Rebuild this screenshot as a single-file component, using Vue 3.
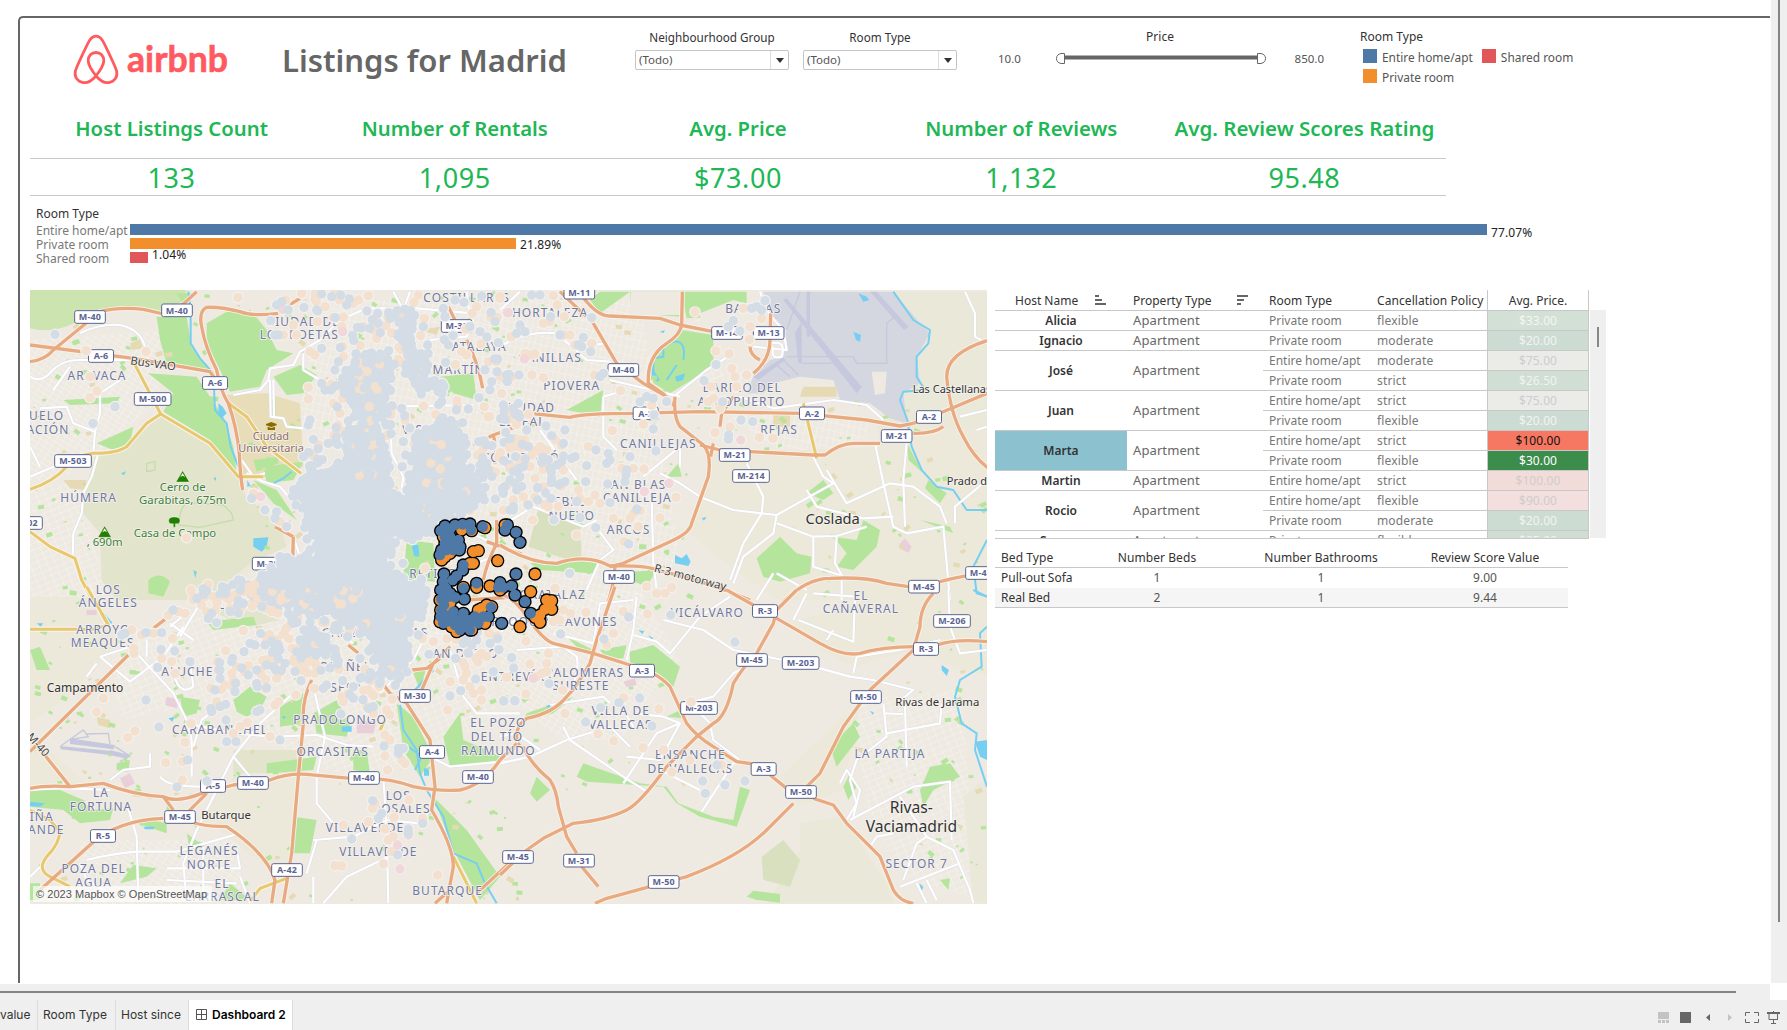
<script setup>
const kpis = [
  ['Host Listings Count', '133'],
  ['Number of Rentals', '1,095'],
  ['Avg. Price', '$73.00'],
  ['Number of Reviews', '1,132'],
  ['Avg. Review Scores Rating', '95.48'],
]
const bars = [
  { name: 'Entire home/apt', color: '#4e79a7', width: 1357, value: '77.07%', shift: 3 },
  { name: 'Private room', color: '#f28e2b', width: 386, value: '21.89%', shift: -1 },
  { name: 'Shared room', color: '#e15759', width: 18, value: '1.04%', shift: -8 },
]
const hosts = [
  { name: 'Alicia', rows: [['Private room', 'flexible', '$33.00', '#d3e0d5', '#f3f6f3']] },
  { name: 'Ignacio', rows: [['Private room', 'moderate', '$20.00', '#cddcd2', '#f0f4f1']] },
  { name: 'José', rows: [['Entire home/apt', 'moderate', '$75.00', '#ebece8', '#cdcdcd'], ['Private room', 'strict', '$26.50', '#d0ded4', '#f0f4f1']] },
  { name: 'Juan', rows: [['Entire home/apt', 'strict', '$75.00', '#ebece8', '#cdcdcd'], ['Private room', 'flexible', '$20.00', '#cddcd2', '#f0f4f1']] },
  { name: 'Marta', active: true, rows: [['Entire home/apt', 'strict', '$100.00', '#f67862', '#111'], ['Private room', 'flexible', '$30.00', '#3c8d4c', '#fff']] },
  { name: 'Martin', rows: [['Entire home/apt', 'strict', '$100.00', '#f2dcda', '#cfcccc']] },
  { name: 'Rocio', rows: [['Entire home/apt', 'flexible', '$90.00', '#f3dfde', '#cfcccc'], ['Private room', 'moderate', '$20.00', '#cddcd2', '#f0f4f1']] },
  { name: 'Susana', rows: [['Private room', 'flexible', '$25.00', '#cfddd3', '#f0f4f1']] },
]
const beds = [
  ['Pull-out Sofa', '1', '1', '9.00'],
  ['Real Bed', '2', '1', '9.44'],
]

// The map is split into four sheets; sheet units are a third of a pixel.
const sheets = [
  {
    at: 'translate(20 280) scale(.33333)',
    areas: [
      ['field', 'M240 700 L340 500 L420 405 L560 490 L655 595 L700 700 L840 770 L700 860 L640 960 L290 960 L250 860Z'],
      ['wood', 'M30 30 H500 L480 90 L420 100 L370 85 L240 90 L150 135 Q90 160 30 145Z'],
      ['casa', 'M230 520 L320 500 L420 405 L560 490 L655 595 L670 640 L780 740 L800 800 L690 850 L600 930 L560 960 H290 L245 900 L240 760 L180 690 L215 560Z'],
      ['uni', 'M610 345 L740 340 L840 370 L850 560 L740 590 L665 590 L640 450Z'],
      ['park', 'M410 110 L500 110 L515 200 L570 270 L480 255 L440 250 L420 180Z'],
      ['park', 'M560 130 L620 95 L700 100 L740 150 L770 210 L820 220 L740 270 L720 320 L630 335 L600 270 L560 190Z'],
      ['park', 'M760 290 L840 255 L890 285 L850 340 L800 345Z'],
      ['park', 'M385 280 L530 290 L570 350 L610 410 L640 500 L650 580 L570 480 L430 395 L460 340Z'],
      ['park', 'M230 490 L340 440 L330 490 L280 510Z'],
      ['park', 'M700 600 L770 630 L830 720 L760 670Z'],
      ['park', 'M1160 780 L1240 790 L1245 905 L1150 900Z'],
      ['park', 'M470 40 H530 L490 72Z M1260 290 L1360 280 L1370 360 L1300 340Z M730 560 L850 545 L820 600 L740 610Z'],
      ['park', 'M385 900 Q420 870 450 905 L430 950 L385 940Z M130 360 L300 350 L290 370 L150 375Z'],
      ['park', 'M750 350 L766 355 L768 410 L752 412Z M700 540 L775 530 L775 550 L710 575Z'],
      ['water', 'M700 775 L745 772 L740 800 L725 815 L700 800Z M1175 795 L1195 795 L1198 830 L1182 828Z M595 370 L608 380 L620 400 L605 415 L596 400Z M682 600 L692 618 L682 620Z M303 580 l15 -6 -6 12Z M580 595 l8 -4 0 12Z M520 870 l10 5 -4 20Z'],
      ['line', 'M500 670 Q480 680 475 735 L540 742 L640 720 L635 700 L610 675 L520 668Z M380 550 L405 545 L405 570 L380 575Z'],
      ['tan', 'M330 190 L360 178 L370 205 L335 210Z M130 600 L200 600 L195 630 L150 625Z M1200 150 L1260 140 L1250 165Z'],
    ],
    rivers: ['M505 35 L512 90 L512 190 L540 235 L580 280 L585 390 L620 430 L632 500 L655 560', 'M760 610 L790 595 L815 575'],
    streets: [
      'M180 160 Q240 130 300 135 Q370 150 378 215', 'M30 290 Q60 310 90 280 Q120 240 180 240 L260 240 L330 240', 'M30 590 L100 560 L220 520 L225 455 L160 430 L140 380 L60 385 M225 455 L240 400 L240 340 L300 300',
      'M235 520 L215 590 L190 640 L185 700 L160 760 L158 830', 'M640 345 L720 330 L745 300 L750 265 L820 255 L840 215 L900 180 L960 120 L1040 85 L1190 85 L1360 100', 'M750 300 L752 410 L790 415 L800 440 L850 445', 'M760 300 L762 410',
      'M680 580 L730 605 L780 620 L830 680', 'M1120 35 L1150 90 L1170 35 M1340 35 L1350 110', 'M1100 290 L1110 380 L1115 520 L1150 590 L1135 700', 'M1110 380 L1360 375', 'M850 220 L850 270 L900 300',
      'M1230 180 L1340 170 L1360 120', 'M1330 750 L1420 790 M1290 960 L1340 860 L1420 830', 'M665 540 L700 590 L735 580', 'M100 330 L150 260 M60 560 L30 500', 'M820 770 L850 860',
    ],
    yellows: ['M30 628 Q100 605 140 560 Q170 525 220 520 Q290 520 320 500 L380 430 L422 402 L340 245', 'M422 402 L570 490 L655 590 L730 590', 'M625 370 L680 410 L740 500 L843 580', 'M30 755 L90 800 L165 835 L185 900 L222 970'],
    motorways: ['M30 245 Q75 240 100 210 L240 95 Q300 80 370 88 L430 102 L490 72 L530 35', 'M30 195 L340 235 L570 275 L602 320', 'M775 100 Q700 110 660 95 Q600 80 560 82 Q535 95 545 140 Q555 200 590 270 Q600 330 625 370 Q650 440 658 520 Q660 580 668 630', 'M800 80 L840 55', 'M1340 180 Q1375 250 1388 325', 'M1285 80 l20 40', 'M1360 495 L1420 465 L1505 435 M1420 465 Q1430 500 1425 550', 'M1430 720 V790 Q1400 850 1390 900 M1400 785 L1505 822', 'M820 770 L818 840 M765 740 L820 770', 'M1340 960 L1500 950'],
    labels: [
      [850, 137, 'CIUDAD DE'], [838, 177, 'LOS POETAS'], [1340, 66, 'COSTILLARES'], [1378, 214, 'ATALAYA'], [1275, 282, 'CHAMARTÍN'], [231, 299, 'ARAVACA'], [80, 421, 'UELO'], [84, 461, 'ACIÓN'], [206, 666, 'HÚMERA'], [1165, 462, 'EL VISO'], [1240, 893, 'RETIRO'], [265, 941, 'LOS'],
    ],
    towns: [],
    shields: [[210, 111, 'M-40'], [471, 91, 'M-40'], [243, 228, 'A-6'], [585, 309, 'A-6'], [398, 357, 'M-500'], [159, 543, 'M-503'], [12, 729, 'M-502'], [743, 851, 'M-30'], [1310, 138, 'M-30']],
    blue: [105,163,285,380,219,430,770,75,785,65,805,90,752,122,765,165,775,165,852,82,905,42,935,50,962,45,890,90,905,205,955,245,945,270,1075,130,1110,115,1305,60,1385,48,1413,97,1425,125,1270,85,1275,110,1210,140,1350,140,1380,155,1285,195,1433,237,1395,270,1415,305,1377,353,1410,330,1345,387,870,420,865,435,880,478,1150,485,1157,525,1147,560,1145,385,695,655,735,690,770,695,765,715,800,740,780,830,655,900,620,925,685,915,720,905,860,825,870,810,905,310,915,330,925,490,850,530,1400,550,1380,555,1480,690],
    orange: [654,53,198,212,378,215,210,290,231,333,210,353,500,773,865,322,865,357,1211,378,1215,865,564,913,797,60,845,40,940,112,790,165,820,135,830,165,870,215,885,225,1000,70,1045,47,1015,60,915,80,892,125,1195,45,968,200,1120,160,1070,175,1370,80,1440,55,1325,215,1340,225,1405,245,1440,290,1470,290,880,520,700,640,780,725,1480,490,970,230,980,300,940,370,960,400,520,950,545,945,580,950,1450,690,1410,580],
    pink: [788,88,968,155,1465,98,722,650,615,945],
    mass: 'M815 640 L855 585 L950 570 L990 490 L1015 420 L990 340 L970 295 L1015 220 L1080 220 L1105 250 L1105 345 L1080 350 L1070 460 L1105 560 L1115 655 L1160 655 L1195 480 L1215 455 L1290 415 L1335 470 L1335 550 L1385 600 L1380 665 L1330 695 L1245 715 L1230 762 L1150 770 L1105 765 L1100 860 L1140 880 L1130 980 L780 980 L720 960 L705 925 L745 880 L800 840 L880 830 L900 790 L865 770 L865 690Z M1130 90 L1180 100 L1180 220 L1225 220 L1220 300 L1270 300 L1260 330 L1200 330 L1170 290 L1160 200 L1140 180Z',
  },
  {
    at: 'translate(500 280) scale(.33333)',
    areas: [
      ['field', 'M640 520 L1140 500 L1130 400 L1461 440 V620 L1461 960 H840 L700 870 L570 760 L620 620Z'],
      ['field2', 'M1180 35 H1461 V450 L1200 440 L1110 370 L1200 330Z'],
      ['casa2', 'M115 685 L240 730 L245 828 L200 838 L85 800Z'],
      ['airport', 'M790 35 H1180 L1260 130 L1290 160 L1250 230 L1260 310 L1210 340 L1220 430 L1170 415 L1110 370 L1020 360 L1000 300 L900 290 L820 310 L790 340 L740 340 L760 290 L810 240 L850 230 L860 150 L810 100Z'],
      ['runway', 'M850 60 L860 55 L1085 320 L1070 340Z M920 35 H930 V170 H920Z M1110 35 L1130 35 L1225 140 L1212 150Z M885 160 L905 125 V250 L895 250Z M760 290 L850 232 L856 240 L775 300Z'],
      ['taxi', 'M860 230 H1060 L1070 250 H1160 V130 L1185 110 M850 240 L895 285 M830 255 L870 290 M905 250 H1000 M860 150 L900 35'],
      ['urban', 'M1115 275 L1160 275 L1155 340 L1125 345Z'],
      ['park', 'M300 35 H390 L300 100 L270 60Z M545 35 H740 V100 L690 110 L560 115Z M390 35 H545 V110 L395 100Z'],
      ['urban', 'M392 35 H540 V105 L392 105Z M600 100 L700 60 L810 90 L800 230 L700 300 L640 260 L600 200Z'],
      ['park', 'M450 250 L545 150 L640 165 L640 260 L510 340 L460 310Z'],
      ['park', 'M200 390 L310 330 L300 410Z'],
      ['park', 'M770 835 L840 770 L890 820 L935 830 L930 880 L840 905 L790 890Z M920 640 L970 600 L1000 640 L970 660Z M1000 770 L1070 780 L1090 720 L1140 750 L1130 800 L1060 870 L1010 860 L1040 820Z'],
      ['park', 'M1285 600 L1340 640 L1320 670 L1275 625Z M1222 490 L1265 575 L1225 540Z M1260 720 L1350 740 L1360 760Z M500 590 L535 550 L545 590Z M90 850 L300 840 L280 880 L120 870Z M340 880 L470 870 L440 920Z'],
      ['tan', 'M910 320 H1010 V350 H900Z M820 400 H870 V440 H820Z'],
      ['water', 'M455 260 L480 300 L470 305 L455 290Z M1075 40 L1100 50 L1108 60 L1090 65Z M1060 155 L1083 165 L1080 185 L1068 180Z M525 825 L545 835 L560 822 L572 845 L565 858 L525 850Z M605 715 L620 710 L612 722Z M525 290 L555 280 L550 300 L530 305Z M480 155 l15 -5 -5 10Z'],
      ['rose', 'M1200 790 L1215 775 L1235 800 L1225 818 L1198 805Z'],
    ],
    rivers: ['M1180 35 L1240 120 L1290 150 L1285 190 L1250 230 L1250 290 L1275 330 L1210 335 L1200 360 L1222 420 L1235 500 L1265 570 L1310 620 L1360 630 L1400 690 L1461 690', 'M550 240 Q560 180 520 185 L490 200 L490 230 L460 235 L460 280', 'M500 300 L530 255', 'M1461 780 L1420 860 L1430 940 L1461 950'],
    streets: [
      'M0 200 Q80 150 170 160 L260 240 L330 245', 'M60 35 L0 90 M230 200 L320 190', 'M700 220 L620 270 L520 350', 'M760 200 L860 210 L850 150 Q820 120 800 90 L780 35', 'M815 190 Q860 180 845 230 Q810 240 820 200', 'M720 350 L820 385 L1000 360 L1100 375 L1150 420', 'M310 350 L310 470 L350 510 M310 350 L380 330',
      'M480 580 L540 610 L600 650 L700 690 L830 705 L1000 610 L970 590 L940 530', 'M980 570 L1040 670 L1170 610 L1240 620 L1320 680 L1340 730', 'M1125 490 L1150 610 L1180 740 L1220 760 L1330 740 L1340 850 L1350 960', 'M1220 490 L1210 600 L1215 740', 'M830 705 L820 760 L730 830 L700 910', 'M940 770 L940 860 L1020 885 M940 770 L1010 768 L1100 740 M1010 770 L1005 850 L1025 885 V960', 'M830 730 L940 770', 'M280 730 L340 810 L300 840 L260 930', 'M455 660 L460 850 L470 930', 'M740 550 L790 650 L785 700 L730 790 L690 900', 'M1395 35 L1425 100 L1425 170 L1461 190', 'M1365 730 L1365 680 L1461 600', 'M1380 410 L1461 390 M1430 450 L1461 440', 'M330 300 L540 350 M120 450 L230 600 M430 590 L540 500 L540 560', 'M0 740 L100 680 L250 740 L290 720', 'M820 880 L770 960 M830 880 L920 930', 'M920 630 L950 680 L1090 715 L1180 710',
    ],
    yellows: ['M910 370 L950 535'],
    motorways: ['M180 35 L280 130 L350 250 L430 310 L500 350 L525 380', 'M240 40 Q290 110 330 108 L480 115 L540 135 L640 155', 'M547 35 L545 135 Q540 165 500 190 Q440 230 445 310 L495 345', 'M90 400 L210 412 Q250 400 400 400 L600 395 L900 400 L1100 420 L1200 438 L1240 430', 'M525 350 Q520 410 540 440 L610 495 Q635 520 625 590 Q600 660 575 730 Q570 760 510 785 L370 850 L330 860', 'M600 495 L660 510 L940 525 L975 525 Q1020 490 1060 490 L1140 490 M1240 460 Q1300 462 1330 440 M1240 430 L1330 395 L1461 340', 'M1461 182 Q1340 220 1340 290 Q1350 400 1390 470 Q1420 530 1465 565', 'M760 280 Q810 240 810 180 L812 100', 'M660 440 L665 400 L700 350 M640 490 L632 530', 'M0 795 Q90 850 170 850 Q260 820 330 858 Q440 855 470 870 Q620 905 750 960', 'M345 860 Q340 920 325 965', 'M850 965 Q920 895 990 895 Q1100 890 1160 910 L1240 922 L1320 905 Q1390 885 1461 880', 'M750 200 Q750 225 780 240'],
    labels: [[150, 111, 'HORTALEZA'], [150, 247, 'CANILLAS'], [215, 329, 'PIOVERA'], [88, 397, 'CIUDAD'], [67, 437, 'LINEAL'], [475, 503, 'CANILLEJAS'], [760, 100, 'BARAJAS'], [727, 336, 'BARRIO DEL'], [725, 377, 'AEROPUERTO'], [837, 462, 'REJAS'], [78, 545, 'CONCEPCIÓN'], [412, 627, 'SAN BLAS-'], [412, 667, 'CANILLEJA'], [185, 679, 'PUEBLO'], [215, 719, 'NUEVO'], [386, 762, 'ARCOS'], [140, 958, 'MORATALAZ'], [1083, 959, 'EL']],
    towns: [[998, 731, 'Coslada', 44], [1356, 338, 'Las Castellanas', 33], [1410, 616, 'Prado de', 33]],
    shields: [[238, 38, 'M-11'], [370, 270, 'M-40'], [681, 159, 'M-14'], [806, 159, 'M-13'], [437, 400, 'A-2'], [936, 400, 'A-2'], [1287, 411, 'A-2'], [1190, 468, 'M-21'], [704, 525, 'M-21'], [753, 588, 'M-214'], [357, 891, 'M-40'], [1272, 920, 'M-45'], [1443, 879, 'M-45']],
    blue: [95,45,120,45,152,110,60,135,75,155,50,160,275,113,180,165,250,172,245,200,272,215,235,195,57,285,20,285,22,305,310,280,300,290,795,62,755,85,770,80,785,90,700,122,685,140,720,153,648,254,612,302,440,350,420,365,460,355,500,365,668,365,462,405,460,447,723,420,758,425,686,465,685,478,55,370,40,385,10,375,12,395,50,405,138,438,80,450,195,450,155,467,190,490,85,500,288,510,325,520,330,540,390,530,468,513,215,535,225,530,320,550,260,557,380,570,378,585,375,605,323,612,257,605,195,605,185,545,170,555,145,540,150,565,155,595,113,623,113,660,153,655,330,668,230,665,410,687,240,713,162,720,287,743,386,792,209,880,30,690,40,680,30,600,45,610,60,590,65,620,50,630,10,640,70,560,40,575,15,620],
    orange: [172,75,160,47,193,110,585,96,130,130,150,125,33,170,190,165,210,165,275,190,225,195,75,220,90,225,105,222,96,285,130,293,283,285,362,332,86,403,430,433,337,452,645,458,690,440,455,375,648,213,687,221,748,178,695,265,705,290,740,285,710,320,633,320,640,355,660,385,625,365,730,85,785,115,750,140,778,473,819,475,40,490,60,480,75,500,30,500,120,500,95,525,140,510,265,500,400,565,432,567,365,565,55,535,90,560,130,550,75,480,235,630,285,645,240,655,265,665,300,670,175,680,145,680,130,620,105,595,190,570,528,652,480,714,340,715,420,692,400,700,390,715,415,740,230,765,98,720,372,785,165,925,440,920,470,940,515,922,495,940,40,660,70,650,5,340,0,50],
    pink: [23,98,73,237,722,480,507,610,433,635],
    mass: '',
  },
  {
    at: 'translate(20 590) scale(.33333)',
    areas: [
      ['field', 'M30 20 L230 20 L260 100 L320 130 L240 220 L130 330 L30 400Z M640 560 L830 560 L800 880 L760 850 L600 720 L540 690 L600 600Z M30 430 L200 580 L30 590Z'],
      ['casa', 'M640 480 H830 V550 H640Z M560 60 L790 20 L780 90 L690 110Z'],
      ['park', 'M640 330 L690 290 L740 320 L720 360 L680 380 L650 365Z M780 350 L850 310 L855 400 L780 410Z M560 95 L700 80 L710 105 L580 120Z'],
      ['park', 'M880 370 L950 330 L990 400 L980 440 L890 430Z M1130 340 L1180 380 L1240 500 L1200 560 L1150 480Z M1240 620 L1340 720 L1440 860 L1380 930 L1300 780Z'],
      ['park', 'M30 600 L120 600 L190 630 L210 660 L280 655 L270 690 L180 700 L130 660 L30 650Z M820 680 L890 690 L870 790 L820 790Z'],
      ['park', 'M1270 440 L1320 370 L1330 450 L1400 480 L1460 510 L1290 530Z M480 320 L540 330 L530 370 L490 380Z M740 520 L890 500 L880 540 L740 550Z M630 880 L690 930 L600 930Z M340 825 L410 835 L380 860 L300 880Z'],
      ['park', 'M30 180 L60 170 L90 240 L50 240Z M390 690 L440 700 L440 730 L350 700Z M290 520 L330 510 L325 545 L290 540Z M30 880 H60 V930 H30Z M1000 480 L1040 480 L1050 550 L1000 540Z M1180 250 L1220 230 L1200 300Z M500 730 l40 30 -30 20Z'],
      ['rose', 'M440 320 L480 330 L470 355 L435 345Z M300 565 L330 550 L345 580 L315 595Z M1010 395 L1070 390 L1060 430 L1010 430Z M200 60 h30 v15 h-30Z'],
      ['water', 'M30 635 L75 640 L60 650 L30 648Z M370 710 L405 710 L400 718 L375 718Z M1212 535 H1227 V557 H1212Z M965 410 L995 408 L995 425 L965 425Z M785 378 l14 2 -8 8Z M445 385 l20 -5 -8 15Z M50 100 l20 0 -8 10Z'],
      ['runway', 'M150 445 L285 465 L280 478 L150 462Z M120 468 L285 484 L275 496 L122 478Z M270 480 L330 495 L320 506 L265 494Z'],
      ['taxi', 'M122 468 L190 420 L205 440 L150 448 M200 432 L265 430 L270 462 M285 470 L330 498 L300 515'],
      ['tan', 'M230 380 l40 10 0 25 -35 -10Z M340 600 h25 v20 h-25Z M960 380 l20 -8 5 20Z M570 830 l20 -6 0 20Z'],
    ],
    rivers: ['M1140 345 L1150 420 L1190 480 L1200 550 L1220 600 L1270 680 L1300 790 L1370 820 L1395 880 L1430 940', 'M1240 240 L1185 300', 'M250 70 L275 100', 'M1165 470 L1205 500 L1185 540'],
    streets: [
      'M350 190 L460 310 L500 390 L515 450 L515 560', 'M240 200 L330 170 M240 200 L330 275 L430 200 L490 110', 'M520 470 L545 390 L600 350 M500 400 L640 430 L760 440 L890 435 L980 465 L1060 470', 'M820 310 L720 400 L640 500 L590 600 L530 720 L490 820 L500 935', 'M880 290 L915 440 L890 560 L890 640 L940 700',
      'M30 600 Q100 590 270 600 M270 570 L310 540 L390 530 L390 490', 'M320 640 L350 740 L355 930', 'M200 810 Q280 790 350 785 L470 785 L660 730', 'M440 835 L660 835 L650 780 M440 870 L650 880 M550 770 V930 M660 860 L690 940', 'M1090 560 L1100 720 L1105 940', 'M880 750 L1000 740 L1100 690 M880 860 V940 M890 750 L860 850', 'M1105 800 L980 860 L910 940', 'M1100 690 L1200 700 L1240 650', 'M420 560 Q440 590 540 590', 'M640 500 L690 560', 'M380 150 L380 200 M450 100 L520 150 M480 140 L540 40 M450 110 L510 60', 'M1080 310 L1180 210 L1210 150', 'M1230 500 L1290 530 L1500 510', 'M1290 180 L1330 320 L1370 370 L1500 370', 'M30 860 L60 830 M180 820 L200 870 L250 900', 'M200 260 L230 220 M900 90 L1000 160', 'M460 250 Q480 320 520 290 L510 220',
    ],
    yellows: ['M30 118 H220 L265 105 L200 -10', 'M265 105 L245 70', 'M120 720 Q120 760 80 800 Q50 840 90 860 L150 890 M30 660 L90 690 L115 720', 'M1300 800 L1370 940', 'M690 935 L720 895 L800 865', 'M1095 390 L1080 420'],
    motorways: ['M435 88 L400 115 M325 195 L30 485', 'M70 490 Q110 540 150 590 L250 580 Q340 615 430 620 Q470 640 545 610 L640 585 L750 570 Q800 550 860 553 L1000 566 Q1100 560 1180 590 Q1260 605 1320 600 Q1390 585 1440 510 L1500 460', 'M30 595 Q80 585 150 590', 'M430 620 L460 660', 'M60 900 L210 765 Q290 690 430 685', 'M560 610 L490 680 Q520 710 620 710 Q740 790 765 870 L755 940', 'M875 270 Q845 330 850 400 L835 560 L815 790 L790 940', 'M1055 240 L1110 310 L1160 340 L1230 450 L1245 590 L1235 660 Q1300 770 1300 830 L1280 940', 'M1290 170 L1240 220 L1205 300 M1175 240 L1220 235 L1260 205', 'M1245 940 L1290 900 M1370 910 L1500 790', 'M985 165 L1015 190'],
    labels: [[265, 50, 'ÁNGELES'], [250, 131, 'ARROYO'], [248, 170, 'MEAQUES'], [665, 58, 'LATINA'], [502, 257, 'ALUCHE'], [600, 431, 'CARABANCHEL'], [960, 401, 'PRADOLONGO'], [938, 497, 'ORCASITAS'], [965, 306, 'USERA'], [975, 244, 'OPAÑEL'], [985, 140, 'ARGANZUELA'], [1325, 203, 'SAN DIEGO'], [1135, 141, 'DELICIAS'], [243, 622, 'LA'], [243, 662, 'FORTUNA'], [65, 692, 'IÑA'], [79, 731, 'ANDE'], [1135, 629, 'LOS'], [1145, 669, 'ROSALES'], [1035, 727, 'VILLAVERDE'], [1075, 797, 'VILLAVERDE'], [1283, 915, 'BUTARQUE'], [567, 795, 'LEGANÉS'], [567, 836, 'NORTE'], [221, 850, 'POZA DEL'], [221, 890, 'AGUA'], [606, 893, 'EL'], [606, 933, 'CARRASCAL'], [1435, 412, 'EL POZO'], [1431, 453, 'DEL TÍO'], [1435, 495, 'RAIMUNDO']],
    towns: [[195, 307, 'Campamento', 36], [618, 687, 'Butarque', 34]],
    shields: [[1185, 318, 'M-30'], [1236, 486, 'A-4'], [579, 588, 'A-5'], [699, 579, 'M-40'], [1032, 564, 'M-40'], [1374, 561, 'M-40'], [480, 681, 'M-45'], [249, 738, 'R-5'], [801, 840, 'A-42']],
    blue: [305,135,315,130,378,128,425,128,423,178,464,183,510,215,413,232,378,330,417,411,503,510,471,591,561,573,459,60,575,70,565,85,590,98,655,70,670,40,725,50,722,130,690,160,705,165,735,165,672,185,638,205,635,215,600,240,600,265,585,300,645,305,617,343,600,350,572,355,575,365,618,390,720,360,710,365,712,290,740,293,710,280,710,240,685,255,740,225,775,205,795,220,840,150,850,160,843,272,920,285,910,295,968,272,1020,265,1000,290,1000,325,990,315,963,372,1060,350,1045,355,1092,468,1135,475,1150,475,1135,490,1058,632,1085,670,1075,685,995,747,1165,717,1165,730,1133,795,620,455,648,455,780,450,888,75,983,140,953,222,1020,205,1227,193,1161,167,1195,135,1322,302,1290,318,1367,267,1307,205,1475,203,1420,245,1450,333,1485,333,1208,700,1340,150,1355,165,1370,150,1345,190,1330,160,1410,160,880,120,900,140,905,160,860,190,830,185,780,180,760,230,815,85,820,100],
    orange: [230,366,250,325,345,423,323,443,495,457,437,518,487,515,487,570,513,400,342,175,342,190,335,120,400,130,365,135,458,145,425,205,455,215,465,250,475,65,445,75,520,30,555,20,545,45,560,65,630,55,495,70,670,122,617,182,592,215,750,440,682,397,640,430,660,410,635,250,640,270,650,230,615,285,590,335,765,345,775,335,828,315,770,265,830,243,740,155,770,160,765,215,885,250,883,295,965,320,970,335,985,310,945,180,1045,300,1055,310,1040,350,1060,370,1100,360,1110,375,1095,435,1110,450,1095,498,1103,540,1155,520,1145,510,1167,630,1065,640,1058,655,1045,695,1122,682,970,705,1095,717,1120,740,1105,750,1115,785,1090,822,945,827,965,828,1253,855,1290,275,1283,360,1340,250,1330,270,1350,290,1385,300,1360,310,1385,330,1335,230,1240,155,1207,145,1460,262,1430,145,1385,190,1208,685,1410,130,1400,200],
    pink: [615,12,595,240,1165,735,1133,765,1140,837],
    mass: 'M790 -20 L1215 -20 L1215 50 L1165 110 L1155 235 L1115 265 L1085 245 L1055 180 L1045 130 L990 90 L920 70 L880 20Z M850 130 L880 120 L915 170 L900 195 L865 180Z',
  },
  {
    at: 'translate(500 590) scale(.33333)',
    areas: [
      ['field', 'M870 100 L1100 30 L1461 20 V260 L1360 230 L1240 180 L1060 230 L960 180Z M840 560 L1010 400 L1080 350 L1030 600 L900 650Z'],
      ['field2', 'M900 700 L1030 680 L1160 880 L1180 940 H800 L850 860 L900 780Z M1390 620 L1461 560 V940 H1420Z'],
      ['casa2', 'M785 800 L850 750 L900 810 L870 890 L790 870Z'],
      ['park', 'M390 185 L460 165 L540 230 L520 290 L440 250 L390 225Z M230 560 L250 520 L420 580 L500 590 L535 640 L640 680 L700 690 L720 590 L750 600 L710 710 L600 680 L530 640 L490 590 L260 575Z'],
      ['park', 'M90 610 L110 560 L150 600 L110 635Z M740 920 L760 902 L840 912 L840 938 L770 930Z M1260 600 L1290 530 L1350 520 L1380 560 L1300 600 L1270 650Z M1030 590 L1050 550 L1070 590 L1045 630Z'],
      ['park', 'M200 140 L280 180 L240 180Z M80 370 L220 320 L160 370 L70 390Z M990 470 L1060 400 L1080 440 L1010 530Z M1320 870 L1350 865 L1345 900Z M300 180 L380 165 L370 205 L320 210Z M500 380 L540 360 L550 385Z'],
      ['water', 'M1325 225 L1347 240 L1340 258 L1325 240Z M1425 455 L1461 450 V510 L1440 500Z M445 135 L460 145 L455 152Z M415 120 l18 4 -6 8Z M1258 880 L1270 890 L1264 905Z M1110 362 l12 6 -4 6Z'],
      ['rose', 'M370 275 L405 265 L410 285 L380 292Z'],
      ['tan', 'M1060 470 l30 5 -5 15Z M1370 700 l20 8 -8 15Z M540 570 l20 8 -10 12Z'],
    ],
    rivers: ['M1461 110 L1440 130 L1445 230 L1380 270 L1365 320 L1385 400 L1430 430 L1425 480 L1461 590', 'M1420 0 L1461 20', 'M140 350 L180 340'],
    streets: [
      'M160 130 L280 160 L300 40 L400 30 M410 20 L400 120 L380 210', 'M400 135 L470 155 L510 190 L600 80 L690 20', 'M490 90 L610 120 L700 180 L850 210 L960 235 L1050 260 L1120 270 L1240 300 L1190 340', 'M0 130 Q40 80 110 70 M50 180 L190 170 L230 200 Q240 250 210 300', 'M150 345 L310 320 L330 340', 'M0 520 L90 500 L200 450 L330 410 M190 410 L210 450 L370 560 L440 605', 'M370 580 L470 430 L540 400 L490 380 L400 370', 'M380 500 L480 510 L540 400', 'M480 540 L600 600 M700 520 L605 665 M700 520 L740 520', 'M560 340 L640 320 L700 250 L740 230', 'M880 90 L920 10 M895 90 L1060 155 L1065 20 L940 10 M980 150 L1000 120', 'M1345 0 L1350 110 L1380 190 L1461 180', 'M1060 250 L1070 200 L1200 180 L1320 150', 'M1150 340 L1160 440 L1070 510 L1050 570 L1070 640 L1040 690', 'M1215 340 L1220 530 M1160 430 L1320 400 L1325 340 M1155 370 L1210 372', 'M1050 690 L1240 590 L1350 575 L1355 750', 'M1200 620 L1280 740 L1360 780 L1410 900 L1420 940', 'M1200 890 L1380 820 M1250 880 L1280 940 M1280 870 L1310 930 M1210 870 L1250 760 L1280 740', 'M1110 770 L1130 740 L1180 730', 'M0 440 L50 430 L120 480', 'M1020 580 L1040 540 L1080 600 L1060 680', 'M590 360 L630 400 L640 450 L720 510', 'M400 410 L360 340 M330 410 L390 470',
    ],
    yellows: [],
    motorways: ['M0 10 Q50 30 80 80 Q130 150 160 160 L280 190 L390 225 Q470 245 510 290 L560 400 Q590 440 640 470 L710 515 L760 522 M810 555 L860 595', 'M345 -10 L290 150 L270 220 Q230 290 200 320 Q160 370 80 385 Q45 410 50 450', 'M680 0 L760 45 L830 85 L960 160 Q1030 200 1080 190 Q1150 170 1240 170 M1310 165 Q1370 145 1461 155', 'M890 0 L830 60 L820 100 L770 190 Q730 230 700 280 Q680 380 640 400 L590 440 L500 530 Q420 640 380 660 Q320 690 220 700 L130 745 L80 780 L0 855', 'M1300 10 Q1260 50 1260 110 L1240 180 L1110 300 L1030 410 L960 550 L920 590', 'M285 940 L320 925 L560 860 Q720 800 800 720 L880 640', 'M940 625 L1000 645 L1040 700 L1140 800 L1180 900 Q1200 935 1240 940', 'M70 470 Q90 520 150 570 Q170 600 175 650 L200 740 L230 790 M245 830 L295 890', 'M0 510 L50 460'],
    labels: [[1083, 69, 'CAÑAVERAL'], [622, 80, 'VICÁLVARO'], [262, 109, 'PAVONES'], [50, 109, 'MARROQUINA'], [50, 272, 'ENTREVÍAS'], [255, 260, 'PALOMERAS'], [243, 299, 'SURESTE'], [362, 375, 'VILLA DE'], [362, 416, 'VALLECAS'], [571, 508, 'ENSANCHE'], [571, 548, 'DE VALLECAS'], [1170, 503, 'LA PARTIJA'], [1250, 835, 'SECTOR 7']],
    towns: [[1312, 347, 'Rivas de Jarama', 34], [1234, 668, 'Rivas-', 47], [1234, 725, 'Vaciamadrid', 47]],
    shields: [[795, 63, 'R-3'], [1356, 93, 'M-206'], [1278, 177, 'R-3'], [756, 210, 'M-45'], [902, 219, 'M-203'], [426, 242, 'A-3'], [1098, 321, 'M-50'], [597, 354, 'M-203'], [791, 537, 'A-3'], [903, 606, 'M-50'], [54, 801, 'M-45'], [237, 812, 'M-31'], [491, 876, 'M-50']],
    blue: [182,132,35,203,41,234,147,281,12,333,44,332,312,147,386,81,512,75,705,156,419,324,357,338,302,353,257,396,456,408,651,525,608,573,675,585,735,573,616,610],
    orange: [78,153,145,190,90,222,140,220,140,245,125,250,110,260,20,262,78,312,188,300,195,370,258,67,212,70,160,95,180,90,370,65,443,72,340,130,320,165,477,357,371,323,573,335,294,432,341,453,429,473,490,480,570,510,516,546,665,525,165,70,190,60],
    pink: [100, 265],
    mass: '',
  },
]

let seed = 20230
const rnd = () => ((seed = (seed * 16807) % 2147483647) / 2147483647)
const pairs = a => a.reduce((out, v, i) => (i % 2 ? out[out.length - 1].push(v) : out.push([v]), out), [])

// [sheet, x, y, width, height, count, share of blue]
const clusters = [
  [0, 960, 90, 230, 250, 70, 0.65], [0, 1130, 60, 350, 240, 26, 0.5], [0, 930, 300, 190, 200, 60, 0.7], [0, 1130, 360, 250, 130, 20, 0.6],
  [0, 860, 480, 200, 120, 36, 0.8], [0, 1170, 480, 230, 230, 60, 0.8], [0, 1380, 380, 120, 280, 24, 0.4], [0, 880, 30, 180, 90, 9, 0.5],
  [1, 0, 460, 190, 220, 36, 0.5], [1, 0, 340, 60, 120, 6, 0.5], [2, 510, -20, 290, 90, 44, 0.3], [2, 790, -10, 250, 130, 60, 0.5],
  [2, 730, 130, 230, 120, 60, 0.45], [2, 560, 200, 200, 100, 14, 0.45], [2, 1000, 200, 140, 130, 20, 0.6], [2, 1100, 40, 120, 80, 14, 0.7], [2, 1280, 120, 160, 100, 14, 0.5],
  [0, 640, 890, 180, 80, 30, 0.6], [0, 1095, 780, 60, 180, 14, 0.6],
]
for (const [s, x, y, w, h, n, share] of clusters)
  for (let i = 0; i < n; i++) sheets[s][rnd() < share ? 'blue' : 'orange'].push(Math.round(x + rnd() * w), Math.round(y + rnd() * h))

// Listings strung along the outline of each dense mass.
for (const s of sheets)
  for (const part of s.mass.split('Z').filter(Boolean)) {
    const pts = pairs(part.match(/-?\d+/g).map(Number))
    pts.forEach(([x, y], i) => {
      const [nx, ny] = pts[(i + 1) % pts.length]
      const steps = Math.max(1, Math.round(Math.hypot(nx - x, ny - y) / 17))
      for (let k = 0; k < steps; k++)
        s.blue.push(Math.round(x + ((nx - x) * k) / steps + rnd() * 24 - 12), Math.round(y + ((ny - y) * k) / steps + rnd() * 24 - 12))
    })
  }

for (const s of sheets)
  s.dots = [...pairs(s.orange).map(p => [...p, '#f4e0ce']), ...pairs(s.pink).map(p => [...p, '#f1d6da']), ...pairs(s.blue).map(p => [...p, '#d4dde5'])]

const patches = Array.from({ length: 900 }, () => {
  const x = 32 + rnd() * 950, y = 292 + rnd() * 608
  const open = (x > 660 && y > 610 && x < 850) || (x > 680 && y < 400) || (x > 90 && x < 245 && y > 410 && y < 600) || (x > 520 && y > 790 && x < 900) || (x > 690 && x < 790 && y > 450 && y < 640) || (x < 190 && y < 320) || (x > 850 && y > 560 && y < 690 && x < 880)
  const r = 0.8 + rnd() * 2.8
  return { open, kind: rnd() < 0.75 ? 'park' : 'tan', x, y, w: r * 2, h: r * 1.3, turn: `rotate(${Math.round(rnd() * 90 - 45)} ${x} ${y})` }
}).filter(p => !p.open)

const grids = [
  ['g1', 'M30 340 L160 330 L160 400 L100 450 L60 480 L30 480Z'], ['g2', 'M310 300 L640 300 L680 560 L620 620 L420 640 L380 480 L300 420Z'],
  ['g3', 'M30 490 L80 480 L98 560 L110 620 L30 620Z M110 640 L300 590 L480 600 L500 720 L360 780 L300 760 L220 700 L120 720Z'], ['g1', 'M500 600 L640 590 L680 660 L620 740 L560 740 L500 690Z'],
  ['g2', 'M720 410 L870 420 L860 450 L780 450Z M800 500 L950 480 L960 570 L850 570Z'], ['g3', 'M850 700 L960 690 L980 900 L910 880 L870 820Z'], ['g1', 'M80 840 L240 840 L240 904 H80Z'], ['g3', 'M690 300 L770 300 L740 380 L700 380Z'],
]

const chosenOrange = pairs([65,180,75,170,90,160,125,90,155,92,195,83,255,75,160,155,175,152,150,190,160,190,233,182,345,222,332,275,130,262,170,262,210,258,240,270,85,110,70,110,90,330,60,365,185,325,200,315,215,320,175,330,110,395,95,380,155,390,195,370,380,300,395,302,395,328,375,328,360,345,345,352,360,367,300,380,88,340,60,300,62,330,90,310])
const chosenBlue = pairs([62,92,75,78,90,88,105,75,128,73,150,72,153,90,188,80,262,75,255,90,288,97,300,127,115,120,95,130,75,130,65,150,80,150,100,150,120,140,118,150,60,165,90,110,75,110,130,195,128,210,110,228,98,240,72,222,70,245,62,270,78,265,64,298,75,285,90,280,85,290,105,292,133,297,130,265,170,250,240,248,235,262,250,262,275,258,288,222,285,285,315,305,64,330,72,315,62,350,80,365,75,345,100,335,130,340,115,360,95,360,135,358,150,360,105,375,120,390,135,375,155,365,150,390,165,350,175,370,190,350,205,350,213,322,245,370,332,340,70,370])
const badgeWidth = t => ({ 3: 75, 4: 92, 5: 110 })[t.length]
</script>

<template>
  <div class="app">
    <div class="viewport">
      <div class="canvas">
        <div class="dashboard">
          <header class="head">
            <svg class="logo" width="160" height="52" viewBox="0 0 160 52">
              <path d="M24.500 42.500C18.500 35 16.200 30.500 16.200 26.500C16.200 21.800 19.500 18.500 24 18.500C28.500 18.500 31.800 21.800 31.800 26.500C31.800 30.500 29.500 35 23.500 42.500C19 47.500 15.500 49.300 11.200 48.600C5.500 47.600 2.300 43 3.300 37.500C4 34 7 28.500 10.500 20.500L15.800 9.500C18.300 4.200 20.300 2.200 24 2.200C27.700 2.200 29.700 4.200 32.200 9.500L37.500 20.500C41 28.500 44 34 44.700 37.500C45.700 43 42.500 47.600 36.800 48.600C32.500 49.300 29 47.500 24.500 42.500Z" />
              <text x="55" y="37.500" textLength="101" lengthAdjust="spacingAndGlyphs">airbnb</text>
            </svg>
            <h1>Listings for Madrid</h1>
            <div v-for="f in ['Neighbourhood Group', 'Room Type']" :key="f" class="filter">
              <span class="cap">{{ f }}</span>
              <div class="select"><span>(Todo)</span><i><svg width="8" height="5"><path d="M0 0H8L4 5Z" /></svg></i></div>
            </div>
            <div class="price">
              <span class="cap">Price</span>
              <div class="slider">
                <span>10.0</span>
                <svg width="212" height="13" viewBox="0 0 212 13">
                  <path class="rail" d="M9 5.500H203" />
                  <path class="knob" d="M9.500 1.500V11.500H6Q1.500 10.500 1.500 6.500T6 1.500Z M202.500 1.500V11.500H206Q210.500 10.500 210.500 6.500T206 1.500Z" />
                </svg>
                <span>850.0</span>
              </div>
            </div>
            <div class="legend">
              <span class="cap">Room Type</span>
              <div class="keys">
                <span><i class="entire"></i>Entire home/apt</span><span><i class="shared"></i>Shared room</span>
                <span><i class="private"></i>Private room</span>
              </div>
            </div>
          </header>

          <section class="kpis">
            <div v-for="k in kpis" :key="k[0]" class="kpi"><h2>{{ k[0] }}</h2><p>{{ k[1] }}</p></div>
          </section>

          <section class="bars">
            <span class="cap">Room Type</span>
            <div v-for="b in bars" :key="b.name" class="bar-row">
              <span class="bar-name">{{ b.name }}</span>
              <span class="bar" :style="{ width: b.width + 'px', background: b.color }"></span>
              <span class="bar-value" :style="{ marginTop: b.shift + 'px' }">{{ b.value }}</span>
            </div>
          </section>

          <section class="lower">
            <div class="map">
              <svg width="957" height="614" viewBox="30 290 957 614">
                <defs>
                  <pattern id="g1" width="7" height="5" patternUnits="userSpaceOnUse" patternTransform="rotate(32)"><path d="M0 0H7M0 0V5" class="hair" /></pattern>
                  <pattern id="g2" width="6" height="8" patternUnits="userSpaceOnUse" patternTransform="rotate(12)"><path d="M0 0H6M0 0V8" class="hair" /></pattern>
                  <pattern id="g3" width="8" height="6" patternUnits="userSpaceOnUse" patternTransform="rotate(-22)"><path d="M0 0H8M0 0V6" class="hair" /></pattern>
                </defs>
                <path v-for="(g, i) in grids" :key="'g' + i" :d="g[1]" :fill="`url(#${g[0]})`" />
                <g v-for="s in sheets" :key="'a' + s.at" :transform="s.at">
                  <path v-for="(a, i) in s.areas" :key="i" :class="a[0]" :d="a[1]" />
                </g>
                <rect v-for="(p, i) in patches" :key="'p' + i" :class="p.kind" :x="p.x" :y="p.y" :width="p.w" :height="p.h" :transform="p.turn" />
                <g v-for="s in sheets" :key="'w' + s.at" :transform="s.at">
                  <path v-for="(d, i) in s.rivers" :key="'r' + i" class="river" :d="d" />
                  <path v-for="(d, i) in s.streets" :key="'c' + i" class="street-edge" :d="d" />
                  <path v-for="(d, i) in s.streets" :key="'s' + i" class="street" :d="d" />
                </g>
                <g v-for="s in sheets" :key="'m' + s.at" :transform="s.at">
                  <path v-for="(d, i) in [...s.yellows, ...s.motorways]" :key="'c' + i" class="road-edge" :d="d" />
                  <path v-for="(d, i) in s.yellows" :key="'y' + i" class="yellow" :d="d" />
                  <path v-for="(d, i) in s.motorways" :key="'o' + i" class="motorway" :d="d" />
                </g>
                <g v-for="s in sheets" :key="'l' + s.at" :transform="s.at">
                  <text v-for="(l, i) in s.labels" :key="'t' + i" class="district" :x="l[0]" :y="l[1]">{{ l[2] }}</text>
                  <text v-for="(l, i) in s.towns" :key="'n' + i" class="town" :x="l[0]" :y="l[1]" :font-size="l[3]">{{ l[2] }}</text>
                  <g v-for="(b, i) in s.shields" :key="'b' + i">
                    <rect class="badge" :x="b[0] - badgeWidth(b[2]) / 2" :y="b[1] - 19" :width="badgeWidth(b[2])" height="38" rx="6" />
                    <text class="badge-text" :x="b[0]" :y="b[1] + 10">{{ b[2] }}</text>
                  </g>
                </g>
                <g transform="translate(20 280) scale(.33333)">
                  <text class="road-name" transform="translate(398 262) rotate(8)">Bus-VAO</text>
                  <text class="campus" x="753" y="480">Ciudad</text><text class="campus" x="753" y="516">Universitaria</text>
                  <path class="cap-icon" d="M738 432L754 426L770 432V436L754 441L738 436Z M743 440V450H765V440L754 444Z" />
                  <text class="nature" x="488" y="633">Cerro de</text><text class="nature" x="488" y="671">Garabitas, 675m</text>
                  <text class="nature" x="465" y="770">Casa de Campo</text><text class="nature" x="254" y="797">, 690m</text>
                  <path class="peak" d="M488 572L508 606H468Z M254 738L274 772H234Z" />
                  <path class="snow" d="M488 579L495 591L488 587L481 591Z M254 745L261 757L254 753L247 757Z" />
                  <path class="peak" d="M446 722Q446 711 463 711Q480 711 480 722Q480 733 466 731V742H460V731Q446 733 446 722Z" />
                </g>
                <g transform="translate(500 280) scale(.33333)"><text class="road-name" transform="translate(568 903) rotate(15)">R-3 motorway</text></g>
                <g transform="translate(20 590) scale(.33333)"><text class="road-name" transform="translate(46 472) rotate(48)">M-40</text></g>

                <g v-for="s in sheets" :key="'h' + s.at" :transform="s.at">
                  <path class="mass-halo" :d="s.mass" />
                  <circle v-for="(d, i) in s.dots" :key="i" class="halo" :cx="d[0]" :cy="d[1]" r="17.500" />
                </g>
                <g v-for="s in sheets" :key="'d' + s.at" :transform="s.at">
                  <path class="mass" :d="s.mass" />
                  <circle v-for="(d, i) in s.dots" :key="i" :cx="d[0]" :cy="d[1]" r="14" :fill="d[2]" />
                </g>
                <g transform="translate(420 500) scale(.33333)">
                  <circle v-for="(d, i) in [...chosenOrange, ...chosenBlue]" :key="'k' + i" :cx="d[0]" :cy="d[1]" r="20" />
                  <circle v-for="(d, i) in chosenOrange" :key="'o' + i" :cx="d[0]" :cy="d[1]" r="16" fill="#f28e2b" />
                  <circle v-for="(d, i) in chosenBlue" :key="'b' + i" :cx="d[0]" :cy="d[1]" r="16" fill="#4e79a7" />
                </g>
              </svg>
              <span class="credit">© 2023 Mapbox © OpenStreetMap</span>
            </div>

            <div class="tables">
              <div class="hosts-wrap">
                <div class="hosts">
                  <div class="hosts-head">
                    <span class="hn">Host Name<svg width="11" height="10"><path d="M0 1H4M0 5H7M0 9H11" /></svg></span>
                    <span class="pt">Property Type<svg width="11" height="10"><path d="M0 1H11M0 5H7M0 9H4" /></svg></span>
                    <span class="rt">Room Type</span><span class="cp">Cancellation Policy</span><span class="ap">Avg. Price.</span>
                  </div>
                  <div v-for="h in hosts" :key="h.name" class="host">
                    <b class="name" :class="{ active: h.active }">{{ h.name }}</b>
                    <span class="property">Apartment</span>
                    <div class="sub">
                      <div v-for="(r, i) in h.rows" :key="i" class="line-row">
                        <span class="room">{{ r[0] }}</span><span class="policy">{{ r[1] }}</span>
                        <span class="money" :style="{ background: r[3], color: r[4] }">{{ r[2] }}</span>
                      </div>
                    </div>
                  </div>
                </div>
                <div class="mini-scroll"><i></i></div>
              </div>
              <div class="beds">
                <div class="bed head-row"><span>Bed Type</span><span>Number Beds</span><span>Number Bathrooms</span><span>Review Score Value</span></div>
                <div v-for="b in beds" :key="b[0]" class="bed"><span v-for="(c, i) in b" :key="i">{{ c }}</span></div>
              </div>
            </div>
          </section>
        </div>
      </div>
      <div class="vscroll"><i></i></div>
    </div>
    <div class="hscroll"><div><i></i></div></div>
    <footer>
      <span class="tab first">value</span><span class="tab second">Room Type</span><span class="tab third">Host since</span>
      <span class="tab current"><svg width="11" height="11"><path d="M.5 .5H10.500V10.500H.5ZM5.500 .5V10.500M.5 5.500H10.500" /></svg>Dashboard 2</span>
      <svg class="tools" width="124" height="14" viewBox="0 0 124 14">
        <path fill="#c3c3c3" d="M0 1H11V8H0ZM0 9H3V12H0ZM4 9H7V12H4ZM8 9H11V12H8Z" />
        <path fill="#666" d="M22 1H33V12H22ZM52 3V10L48 6.500Z" /><path fill="#c3c3c3" d="M70 3V10L74 6.500Z" />
        <path class="ink" d="M87.500 5V1.500H92M96 1.500H100.500V5M100.500 8V11.500H96M92 11.500H87.500V8" />
        <path class="ink" d="M111 8.500V2M119.500 2V8.500M111 8.500H120M115.500 8V12M113 12.500H118M115.500 0V2" /><path fill="#666" d="M109 1H122V3H109Z" />
      </svg>
    </footer>
  </div>
</template>

<style>
body { margin: 0; overflow: hidden; }
</style>

<style scoped>
.app { width: 1787px; height: 1030px; display: flex; flex-direction: column; background: #fff; font: 12px/16px "Noto Sans", "Open Sans", sans-serif; color: #333; }
.app * { box-sizing: border-box; }
h1, h2, p { margin: 0; }
.viewport { display: flex; height: 984px; }
.canvas { width: 1771px; padding: 16px 1px 1px 18px; }
.dashboard { height: 967px; border: 2px solid #666; border-right: 0; border-bottom: 0; border-radius: 5px 0 0 0; padding: 0 0 0 10px; display: flex; flex-direction: column; }
.vscroll { width: 16px; height: 983px; background: #efefef; padding-left: 7px; }
.vscroll i { display: block; width: 2px; height: 922px; background: #848484; }
.hscroll { height: 16px; }
.hscroll div { width: 1770px; height: 16px; background: #efefef; padding-top: 7px; }
.hscroll i { display: block; height: 2px; width: 1736px; background: #848484; }

.head { height: 91px; display: flex; align-items: flex-start; flex: none; }
.cap { color: #333; white-space: nowrap; }
.filter .cap { font-size: 11.700px; }
.logo { margin: 16px 0 0 42px; flex: none; }
.logo path { fill: none; stroke: #ff5a5f; stroke-width: 2.800; }
.logo text { font: bold 37px Lato, sans-serif; fill: #ff5a5f; stroke: #ff5a5f; stroke-width: .6; }
h1 { margin-left: 50px; width: 287px; font-size: 31px; line-height: 42px; margin-top: 21px; font-weight: 600; color: #666; white-space: nowrap; }
.filter { width: 154px; margin: 11px 0 0 14px; text-align: center; }
h1 + .filter { margin-left: 66px; }
.select { display: flex; height: 20px; margin-top: 4px; border: 1px solid #c4c4c4; border-radius: 2px; justify-content: space-between; text-align: left; line-height: 17px; padding-left: 3px; color: #555; font-size: 11.500px; }
.select i { width: 18px; border-left: 1px solid #ddd; display: flex; align-items: center; justify-content: center; }
.select svg { fill: #333; }
.price { width: 330px; margin: 11px 0 0 38px; text-align: center; }
.slider { display: flex; justify-content: space-between; align-items: center; height: 20px; margin-top: 4px; padding: 0 1px 0 3px; color: #555; font-size: 11.500px; }
.slider svg { margin: -1px 0 0 6px; }
.rail { stroke: #666; stroke-width: 4; }
.knob { fill: #fff; stroke: #666; }
.legend { margin: 11px 0 0 35px; width: 260px; }
.keys { display: flex; flex-wrap: wrap; margin: 4px 0 0 3px; column-gap: 9px; }
.keys span { display: flex; height: 20px; line-height: 16px; font-size: 11.900px; color: #555; }
.keys i { height: 14px; width: 14px; margin-right: 5px; }
.entire { background: #4e79a7; } .shared { background: #e15759; } .private { background: #f28e2b; }

.kpis { width: 1416px; display: flex; flex: none; height: 96px; }
.kpi { flex: 1; text-align: center; color: #20b755; }
.kpi h2 { height: 50px; padding-top: 5px; border-bottom: 1px solid #c8c8c8; font-size: 20.300px; line-height: 28px; font-weight: 600; white-space: nowrap; }
.kpi:last-child h2 { font-size: 20.500px; }
.kpi p { height: 37px; border-bottom: 1px solid #c8c8c8; font-size: 27px; line-height: 38px; letter-spacing: .6px; }

.bars { height: 85px; flex: none; padding: 1px 0 0 6px; display: flex; flex-direction: column; }
.bars .cap { height: 18px; line-height: 16px; }
.bar-row { display: flex; height: 14px; align-items: center; }
.bar-name { width: 94px; color: #787878; white-space: nowrap; }
.bar { height: 11px; margin-top: -3px; }
.bar-value { margin-left: 4px; color: #222; letter-spacing: .1px; }

.lower { display: flex; flex: none; align-items: flex-start; }
.map { position: relative; width: 957px; height: 614px; background: #eeeae2; }
.map > svg { display: block; }
.credit { position: absolute; left: 3px; bottom: 2px; height: 16px; padding: 0 5px 0 3px; background: rgba(255, 255, 255, .65); font: 11px/17px "Liberation Sans", sans-serif; color: #555; letter-spacing: .05px; }
.field { fill: #ece9da; } .field2 { fill: #eae8d8; } .urban { fill: #eeeae2; } .wood { fill: #cbe4b0; } .casa { fill: #e2e5cc; } .casa2 { fill: #d9e0bf; } .uni { fill: #e7ddb8; }
.park { fill: #b5e59d; } .tan { fill: #e5dab4; } .water { fill: #76cff1; } .airport { fill: #d4d6e0; } .runway { fill: #c6c8dd; } .rose { fill: #e8cfda; }
.line { fill: none; stroke: #c5dcae; stroke-width: 4; }
.taxi { fill: none; stroke: #c6c8dd; stroke-width: 4; }
path.hair { stroke: #fff; stroke-width: .8; fill: none; opacity: .6; }
.river, .street, .street-edge, .yellow, .motorway, .road-edge { fill: none; stroke-linejoin: round; }
.river { stroke: #76cff1; stroke-width: 6; }
.street-edge { stroke: #dcdce6; stroke-width: 9; }
.street { stroke: #fff; stroke-width: 6.500; }
.road-edge { stroke: #fbf3ec; stroke-width: 15; }
.yellow { stroke: #e6c96f; stroke-width: 9; }
.motorway { stroke: #e8aa80; stroke-width: 10; }
.map text { text-anchor: middle; paint-order: stroke; stroke: #f5f2ed; stroke-width: 5px; stroke-linejoin: round; }
.district { font-size: 36px; letter-spacing: 3.200px; fill: #7079a3; }
.map .town { fill: #333; }
.badge { fill: #fff; stroke: #5b6492; stroke-width: 3; }
.map .badge-text { font: bold 27px "Noto Sans", sans-serif; fill: #5b6492; stroke: none; letter-spacing: .5px; }
.road-name { font-size: 34px; fill: #444; }
.campus { font-size: 33px; fill: #8a6d62; }
.nature { font-size: 34px; fill: #3d8136; }
.cap-icon { fill: #8a6a00; } .peak { fill: #228000; stroke: #fff; stroke-width: 1; } .snow { fill: #fff; }
.halo { fill: #f3f1ef; }
.mass { fill: #d4dde5; }
.mass-halo { fill: #f3f1ef; }

.tables { margin-left: 8px; }
.hosts-wrap { display: flex; align-items: flex-end; height: 249px; }
.hosts { width: 594px; height: 249px; overflow: hidden; border-bottom: 1px solid #c8c8c8; border-right: 1px solid #c8c8c8; }
.hosts-head { display: flex; height: 21px; border-bottom: 1px solid #c8c8c8; line-height: 22px; white-space: nowrap; }
.hosts-head svg { fill: none; stroke: #666; stroke-width: 2; }
.hn { width: 138px; padding-left: 20px; } .hn svg { margin-left: 17px; }
.pt { width: 136px; } .pt svg { margin-left: 25px; }
.rt { width: 108px; } .cp { width: 110px; letter-spacing: .08px; }
.ap { width: 101px; border-left: 1px solid #c8c8c8; text-align: center; }
.host { display: flex; align-items: stretch; border-bottom: 1px solid #c8c8c8; }
.name { width: 132px; display: flex; align-items: center; justify-content: center; font-weight: 600; color: #333; }
.active { background: #8cc2d0; }
.property { width: 136px; padding: 0 0 2px 6px; display: flex; align-items: center; color: #666; font-size: 13px; letter-spacing: .1px; }
.sub { flex: 1; }
.line-row { display: flex; height: 20px; border-bottom: 1px solid #c8c8c8; line-height: 19px; color: #777; }
.line-row:last-child { border-bottom: 0; height: 19px; }
.room { width: 108px; padding-left: 6px; } .policy { flex: 1; padding-left: 6px; letter-spacing: .15px; }
.money { width: 101px; border-left: 1px solid #c8c8c8; text-align: center; letter-spacing: .1px; }
.mini-scroll { width: 16px; height: 228px; margin: 0 0 1px 1px; background: #efefef; padding: 17px 0 0 7px; }
.mini-scroll i { display: block; width: 2px; height: 20px; background: #888; }
.beds { width: 573px; margin-top: 8px; border-bottom: 1px solid #c8c8c8; }
.bed { display: flex; height: 20px; line-height: 20px; color: #555; text-align: center; }
.bed span { width: 164px; }
.bed span:first-child { width: 74px; text-align: left; padding-left: 6px; width: 80px; white-space: nowrap; color: #333; }
.bed:last-child { background: #f5f5f5; height: 19px; }
.head-row { height: 21px; line-height: 22px; border-bottom: 1px solid #c8c8c8; }
.head-row span { color: #333; letter-spacing: .07px; }

footer { height: 30px; background: #efefef; display: flex; font: 12px/29px Inter, sans-serif; color: #333; overflow: hidden; }
.tab { border-right: 1px solid #dcdcdc; white-space: nowrap; }
.first { width: 38px; } .second { width: 78px; padding-left: 5px; } .third { width: 73px; padding-left: 5px; }
.current { width: 104px; background: #fff; padding-left: 7px; font-weight: 600; color: #000; display: flex; align-items: center; gap: 5px; font-size: 12px; line-height: 28px; padding-bottom: 1px; }
.current svg { fill: none; stroke: #555; flex: none; }
.tools { margin: 11px 0 0 1365px; }
.ink { fill: none; stroke: #666; }
</style>
